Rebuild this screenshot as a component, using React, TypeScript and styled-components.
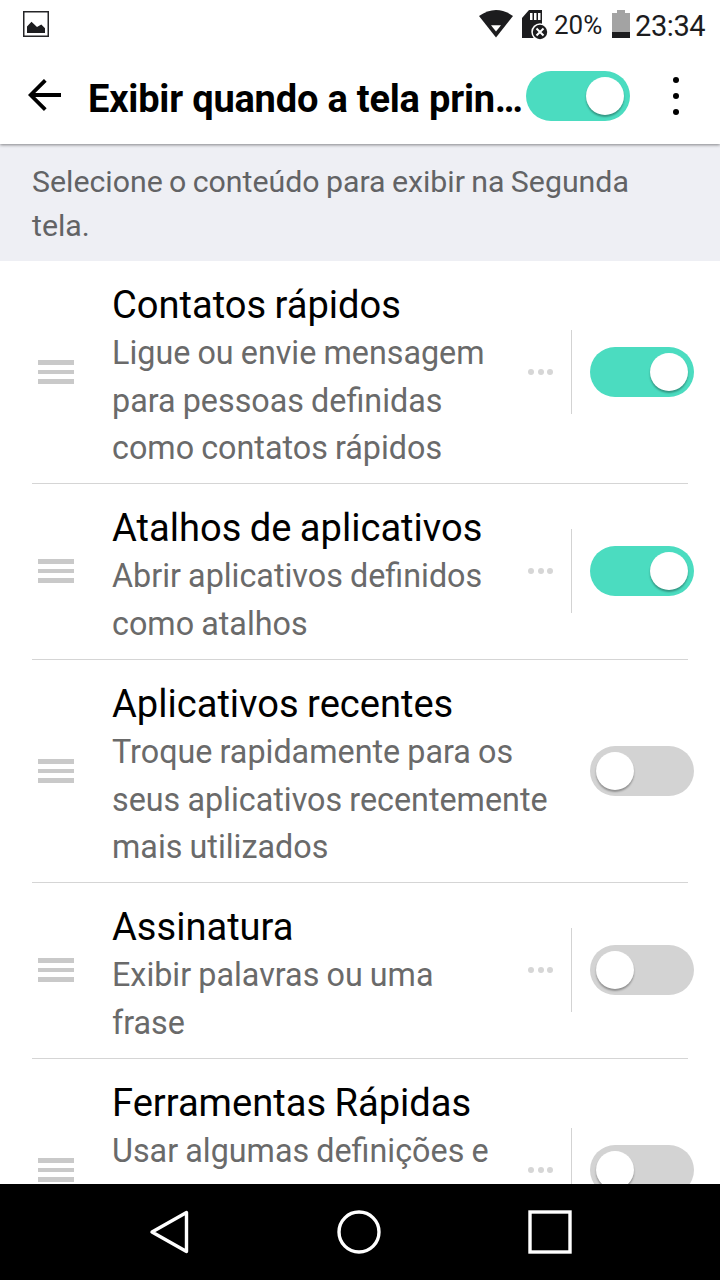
import React from "react";
import styled, { createGlobalStyle } from "styled-components";

const GlobalStyle = createGlobalStyle`
  * { box-sizing: border-box; }
  body { margin: 0; background: #fff; font-family: Roboto, sans-serif; }
  svg { display: block; flex: none; }
`;

const Screen = styled.div`
  width: 720px;
  height: 1280px;
  display: flex;
  flex-direction: column;
  overflow: hidden;
  background: #fff;
`;

const StatusBar = styled.header`
  height: 48px;
  flex: none;
  display: flex;
  align-items: center;
  justify-content: space-between;
  padding: 0 14px 0 23px;
  color: #1c1c1e;
`;

const StatusGroup = styled.div`
  display: flex;
  align-items: center;
  height: 48px;
`;

const BatteryLevel = styled.span`
  margin-left: 6px;
  font-size: 26px;
  line-height: 48px;
  width: 58px;
  white-space: nowrap;
  padding-top: 2px;
`;

const Clock = styled.span`
  margin-left: 5px;
  font-size: 29px;
  letter-spacing: -0.4px;
  line-height: 48px;
  width: 71px;
  white-space: nowrap;
  padding-top: 3px;
`;

const AppBar = styled.div`
  height: 96px;
  flex: none;
  display: flex;
  align-items: center;
  padding: 0 40px 0 28px;
  background: #fff;
  z-index: 1;
  box-shadow: 0 1px 3px rgba(0, 0, 0, 0.45);
  clip-path: inset(0 0 -8px 0);
`;

const Title = styled.h1`
  margin: 0 4px 0 26px;
  width: 434px;
  font-size: 38px;
  font-weight: 700;
  letter-spacing: -0.2px;
  line-height: 50px;
  padding-top: 5px;
  color: #000;
  white-space: nowrap;
`;

const Track = styled.div<{ $on: boolean }>`
  width: 104px;
  height: 50px;
  flex: none;
  border-radius: 25px;
  padding: 6px;
  display: flex;
  justify-content: ${(p) => (p.$on ? "flex-end" : "flex-start")};
  background: ${(p) => (p.$on ? "#4bdcc0" : "#d3d3d3")};
`;

const Knob = styled.div`
  width: 38px;
  height: 38px;
  border-radius: 50%;
  background: #fff;
  box-shadow: 0 2px 2px rgba(0, 0, 0, 0.32);
`;

const MenuDots = styled.div`
  margin: 0 0 1px 43px;
  width: 6px;
  height: 38px;
  flex: none;
  display: flex;
  flex-direction: column;
  justify-content: space-between;
`;

const MenuDot = styled.i`
  width: 6px;
  height: 6px;
  border-radius: 50%;
  background: #000;
`;

const Hint = styled.p`
  margin: 0;
  height: 117px;
  flex: none;
  padding: 16px 32px 0;
  background: #eeeff4;
  color: #626365;
  font-size: 30.3px;
  word-spacing: -1.2px;
  line-height: 44px;
`;

const List = styled.main`
  flex: 1;
  min-height: 0;
  overflow: hidden;
`;

const Row = styled.section<{ $lines: number }>`
  height: ${(p) => (p.$lines === 3 ? 223 : 176)}px;
  margin: 0 32px;
  padding-bottom: ${(p) => (p.$lines === 3 ? 0 : 1)}px;
  border-bottom: 1px solid #d5d5d5;
  display: flex;
  align-items: center;
`;

const Grip = styled.div`
  width: 36px;
  height: 24px;
  margin: 0 38px 0 6px;
  flex: none;
  display: flex;
  flex-direction: column;
  justify-content: space-between;
`;

const GripBar = styled.i`
  height: 4.6px;
  background: #c9c9c9;
`;

const RowText = styled.div<{ $wide: boolean }>`
  width: ${(p) => (p.$wide ? 478 : 399)}px;
  flex: none;
  align-self: flex-start;
  padding: 20px ${(p) => (p.$wide ? 30 : 14)}px 0 0;
`;

const RowTitle = styled.h2`
  margin: 0;
  font-size: 38.1px;
  font-weight: 400;
  word-spacing: -1px;
  line-height: 48px;
  color: #000;
  white-space: nowrap;
`;

const RowDescription = styled.p`
  margin: 1px 0 0;
  font-size: 32.3px;
  word-spacing: -0.9px;
  line-height: 47.5px;
  color: #6a6a6a;
`;

const More = styled.div`
  height: 84px;
  width: 61px;
  flex: none;
  display: flex;
  align-items: center;
  gap: 3.5px;
  padding-left: 17.3px;
  margin-right: 18px;
  border-right: 1px solid #d3d3d3;
`;

const MoreDot = styled.i`
  width: 6px;
  height: 6px;
  border-radius: 50%;
  background: #d6d6d6;
`;

const NavBar = styled.nav`
  height: 96px;
  flex: none;
  display: flex;
  align-items: center;
  justify-content: space-between;
  padding: 0 148px 0 149px;
  background: #000;
`;

const Switch = ({ on }: { on: boolean }) => (
  <Track $on={on} role="switch" aria-checked={on}>
    <Knob />
  </Track>
);

type Item = { title: string; text: string; lines: number; more: boolean; on: boolean };

const items: Item[] = [
  { title: "Contatos rápidos", text: "Ligue ou envie mensagem para pessoas definidas como contatos rápidos", lines: 3, more: true, on: true },
  { title: "Atalhos de aplicativos", text: "Abrir aplicativos definidos como atalhos", lines: 2, more: true, on: true },
  { title: "Aplicativos recentes", text: "Troque rapidamente para os seus aplicativos recentemente mais utilizados", lines: 3, more: false, on: false },
  { title: "Assinatura", text: "Exibir palavras ou uma frase", lines: 2, more: true, on: false },
  { title: "Ferramentas Rápidas", text: "Usar algumas definições e", lines: 3, more: true, on: false },
];

const PictureIcon = () => (
  <svg width="26" height="26" viewBox="0 0 26 26">
    <rect x="0.75" y="0.75" width="24.5" height="24.5" fill="none" stroke="#252527" strokeWidth="1.5" />
    <path d="M4 22V15.5L8.5 10.7L14 16L18.3 13.6L22 17.2V22Z" fill="#1c1c1e" />
  </svg>
);

const WifiIcon = () => (
  <svg width="34" height="28" viewBox="0 0 34 28">
    <path d="M0 6Q17 -6 34 6L17 27.5Z" fill="#1c1c1e" />
    <path d="M12 15.2H22L17 21.4Z" fill="#fff" />
  </svg>
);

const SdCard = styled.svg`
  margin: 2px 0 0 9px;
`;

const CardIcon = () => (
  <SdCard width="26" height="30" viewBox="0 0 26 30">
    <path d="M7 0H20V28H0V8Z" fill="#1c1c1e" />
    <path d="M8 3h2.5v7H8zM12 3h2.5v7H12zM16 3h2.5v7H16z" fill="#fff" />
    <circle cx="18" cy="22" r="8.7" fill="#fff" />
    <circle cx="18" cy="22" r="7.2" fill="#1c1c1e" />
    <path d="M14.5 18.5l7 7M21.5 18.5l-7 7" stroke="#fff" strokeWidth="2" />
  </SdCard>
);

const BatteryIcon = () => (
  <svg width="18" height="28" viewBox="0 0 18 28">
    <path d="M5 0H13V3H18V22H0V3H5Z" fill="#a3a3a3" />
    <path d="M0 22H18V28H0Z" fill="#1c1c1e" />
  </svg>
);

export default function App() {
  return (
    <>
      <GlobalStyle />
      <Screen>
        <StatusBar>
          <PictureIcon />
          <StatusGroup>
            <WifiIcon />
            <CardIcon />
            <BatteryLevel>20%</BatteryLevel>
            <BatteryIcon />
            <Clock>23:34</Clock>
          </StatusGroup>
        </StatusBar>
        <AppBar>
          <svg width="34" height="34" viewBox="0 1 34 34">
            <path d="M33 17H3M17.3 2.3L2.6 17L17.3 31.7" fill="none" stroke="#000" strokeWidth="3.8" />
          </svg>
          <Title>Exibir quando a tela prin…</Title>
          <Switch on />
          <MenuDots>
            <MenuDot />
            <MenuDot />
            <MenuDot />
          </MenuDots>
        </AppBar>
        <Hint>Selecione o conteúdo para exibir na Segunda tela.</Hint>
        <List>
          {items.map((item) => (
            <Row key={item.title} $lines={item.lines}>
              <Grip>
                <GripBar />
                <GripBar />
                <GripBar />
              </Grip>
              <RowText $wide={!item.more}>
                <RowTitle>{item.title}</RowTitle>
                <RowDescription>{item.text}</RowDescription>
              </RowText>
              {item.more && (
                <More>
                  <MoreDot />
                  <MoreDot />
                  <MoreDot />
                </More>
              )}
              <Switch on={item.on} />
            </Row>
          ))}
        </List>
        <NavBar>
          <svg width="40" height="46" viewBox="0 0 40 46">
            <path d="M37.5 3.5V42.5L3 23Z" fill="none" stroke="#fff" strokeWidth="3.4" strokeLinejoin="round" />
          </svg>
          <svg width="44" height="44" viewBox="0 0 44 44">
            <circle cx="22" cy="22" r="20" fill="none" stroke="#fff" strokeWidth="3.4" />
          </svg>
          <svg width="44" height="44" viewBox="0 0 44 44">
            <rect x="2" y="2" width="40" height="40" fill="none" stroke="#fff" strokeWidth="3.4" />
          </svg>
        </NavBar>
      </Screen>
    </>
  );
}
